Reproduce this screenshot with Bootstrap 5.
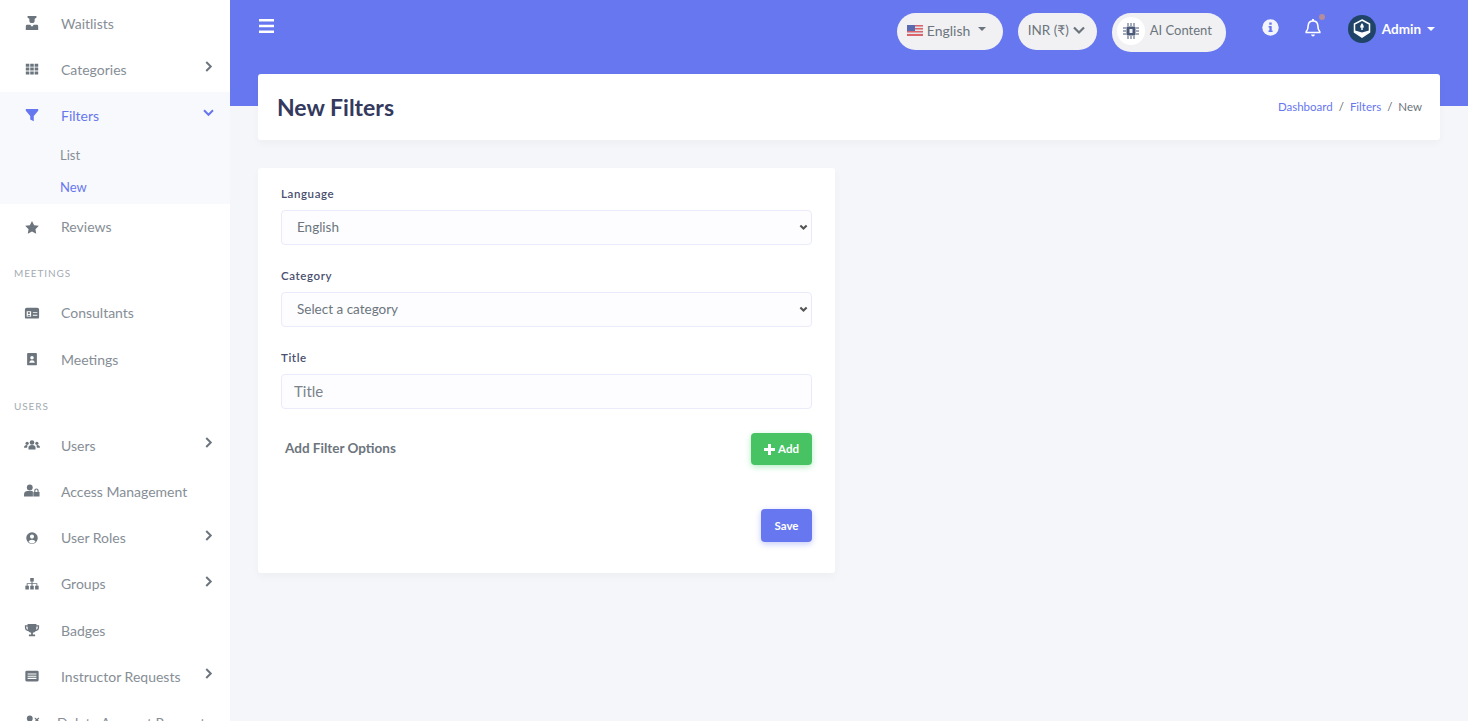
<!DOCTYPE html>
<html lang="en">
<head>
    <meta charset="UTF-8">
    <meta name="viewport" content="width=device-width, initial-scale=1.0">
    <title>New Filters</title>
    <link href="https://cdn.jsdelivr.net/npm/bootstrap@5.3.3/dist/css/bootstrap.min.css" rel="stylesheet">
    <style>
        html, body {
            height: 100%;
            overflow: hidden;
        }

        body {
            font-family: 'Lato', 'Noto Sans', sans-serif;
            font-size: 14px;
            background-color: #f4f6f9;
            color: #6c757d;
        }

        .page-shell {
            height: 721px;
        }

        /* Sidebar */
        .side-menu {
            width: 230px;
            flex: 0 0 230px;
            background-color: #fff;
            overflow: hidden;
        }

        .side-link {
            display: flex;
            align-items: center;
            height: 46.2px;
            padding: 0 17px 0 24px;
            color: #868e96;
            text-decoration: none;
            font-size: 14px;
        }

        .side-link .side-icon {
            width: 16px;
            height: 14.2px;
            margin-right: 21px;
            flex: 0 0 16px;
            fill: #6c757d;
        }

        .side-link .side-arrow {
            width: 9px;
            height: 11px;
            margin-left: auto;
            margin-top: -5px;
            fill: none;
            stroke: #6c757d;
            stroke-width: 2.2;
        }

        .side-open {
            background-color: #f8f9fc;
            height: 111.3px;
        }

        .side-open .side-link {
            color: #6777ef;
        }

        .side-open .side-icon {
            fill: #6777ef;
        }

        .side-open .side-arrow {
            stroke: #6777ef;
            width: 11px;
            height: 9px;
            margin-right: -1px;
        }

        .side-sub {
            display: block;
            height: 32px;
            line-height: 32px;
            padding-left: 60px;
            font-size: 13px;
            color: #868e96;
            text-decoration: none;
        }

        .side-sub.is-current {
            color: #6777ef;
        }

        .side-title {
            height: 40px;
            padding: 16.5px 0 0 14px;
            font-size: 10px;
            line-height: 14px;
            letter-spacing: 0.9px;
            color: #a4abb3;
            text-transform: uppercase;
        }

        .side-cut {
            margin-left: -4px;
        }

        /* Main area */
        .main-area {
            background: linear-gradient(#6777ef 106px, #f4f6f9 106px);
            min-width: 0;
        }

        .top-strip {
            height: 74px;
            padding: 13px 33px 0 29px;
        }

        .burger {
            width: 15px;
            height: 14px;
            margin-top: 6px;
            fill: #fff;
        }

        .pill-btn {
            display: flex;
            align-items: center;
            height: 37px;
            padding-bottom: 3px;
            border-radius: 19px;
            background-color: #f1f1f3;
            color: #6c757d;
            font-size: 14px;
            white-space: nowrap;
        }

        .pill-lang {
            width: 106px;
            padding-left: 10px;
            margin-right: 15px;
        }

        .pill-lang::after {
            margin-left: 8px;
            margin-top: -3px;
        }

        .pill-money {
            width: 79px;
            padding-left: 10px;
            margin-right: 15px;
            font-size: 13.5px;
        }

        .pill-ai {
            width: 114px;
            height: 39px;
            padding-left: 5px;
            margin-right: 36px;
            font-size: 13px;
        }

        .chip-hole {
            display: flex;
            align-items: center;
            justify-content: center;
            width: 28px;
            height: 28px;
            margin-right: 5px;
            border-radius: 50%;
            background-color: #fff;
        }

        .top-icon {
            position: relative;
            margin-top: 6px;
        }

        .top-bell {
            margin-left: 2px;
            margin-right: 27px;
        }

        .avatar-pic {
            margin-top: 2px;
            margin-right: 6px;
        }

        .bell-dot {
            position: absolute;
            top: -5px;
            right: -4px;
            width: 6px;
            height: 6px;
            border-radius: 50%;
            background-color: #b48c9c;
        }

        .admin-name {
            color: #fff;
            font-weight: 700;
            font-size: 13.5px;
            margin-top: 6px;
        }

        .admin-name::after {
            margin-left: 6px;
        }

        .hero-box {
            height: 66px;
            margin: 0 28px 28px 28px;
            padding: 0 18px 0 19px;
            border-radius: 3px;
            box-shadow: 0 4px 8px rgba(0, 0, 0, 0.03);
            border: 0;
        }

        .hero-box h1 {
            font-size: 23px;
            font-weight: 700;
            color: #34395e;
            margin: 2px 0 0;
        }

        .hero-box .breadcrumb {
            --bs-breadcrumb-item-padding-x: 6px;
            font-size: 11.5px;
            margin: 0;
        }

        .hero-box .breadcrumb a {
            color: #6777ef;
            text-decoration: none;
        }

        .hero-box .breadcrumb-item.active {
            color: #6c757d;
        }

        .form-box {
            width: 577px;
            height: 405px;
            margin-left: 28px;
            padding: 18px 23px 0;
            border: 0;
            border-radius: 3px;
            box-shadow: 0 4px 8px rgba(0, 0, 0, 0.03);
        }

        .field-block {
            height: 82px;
        }

        .field-block .form-label {
            display: block;
            height: 24px;
            margin: 0;
            font-size: 11.5px;
            font-weight: 600;
            line-height: 16px;
            letter-spacing: 0.6px;
            color: #4a4f70;
        }

        .field-block .form-select,
        .field-block .form-control {
            height: 35px;
            border-color: #e9ebfa;
            border-radius: 4px;
            background-color: #fdfdff;
            color: #6c757d;
            box-shadow: none;
        }

        .field-block .form-select {
            font-size: 13.5px;
            padding: 0 24px 0 15px;
            background-position: right 3px center;
            background-size: 9px 7px;
            background-image: url("data:image/svg+xml,%3csvg xmlns='http://www.w3.org/2000/svg' viewBox='0 0 12 10'%3e%3cpath fill='none' stroke='%23555' stroke-width='3' d='M1.500 2l4.500 4.500 4.500-4.500'/%3e%3c/svg%3e");
        }

        .field-block .form-control {
            font-size: 15px;
            padding: 0 12px 2px;
        }

        .field-block .form-control::placeholder {
            color: #7b838a;
        }

        .options-row {
            height: 32px;
            margin-top: 1px;
            padding-left: 4px;
        }

        .options-row span {
            font-weight: 700;
            font-size: 13.5px;
            padding-bottom: 2px;
        }

        .add-btn,
        .save-btn {
            font-size: 11.5px;
            font-weight: 700;
            border: 0;
            border-radius: 4px;
            color: #fff;
            padding: 0;
        }

        .add-btn {
            width: 61px;
            height: 32px;
            background-color: #47c363;
            box-shadow: 0 2px 6px #b5edc4;
        }

        .add-btn svg {
            width: 11px;
            height: 11px;
            fill: #fff;
            margin: -2px 3px 0 0;
        }

        .save-btn {
            width: 51px;
            height: 33px;
            margin-top: 44px;
            background-color: #6777ef;
            box-shadow: 0 2px 6px #c5cbf8;
        }
    </style>
</head>
<body>
    <div class="page-shell d-flex">
        <aside class="side-menu">
            <a class="side-link" href="#">
                <svg class="side-icon" viewBox="0 0 18 16"><path d="M4 0h10v2l-2 1v2a3 3 0 0 1-6 0V3L4 2zM3 10h4l2 2 2-2h4q1 0 1 2v4H2v-4q0-2 1-2z"/></svg>
                <span>Waitlists</span>
            </a>
            <a class="side-link" href="#">
                <svg class="side-icon" viewBox="0 0 18 16"><path d="M2 2h4v3.400H2zM7 2h4v3.400H7zM12 2h4v3.400h-4zM2 6.300h4v3.400H2zM7 6.300h4v3.400H7zM12 6.300h4v3.400h-4zM2 10.600h4V14H2zM7 10.600h4V14H7zM12 10.600h4V14h-4z"/></svg>
                <span>Categories</span>
                <svg class="side-arrow" viewBox="0 0 10 12"><path d="M2.500 1l5 5-5 5"/></svg>
            </a>
            <div class="side-open">
                <a class="side-link" href="#">
                    <svg class="side-icon" viewBox="0 0 18 16"><path d="M2 1h14v2l-5 6v6l-4-2V9L2 3z"/></svg>
                    <span>Filters</span>
                    <svg class="side-arrow" viewBox="0 0 12 10"><path d="M1 2.500l5 5 5-5"/></svg>
                </a>
                <a class="side-sub" href="#">List</a>
                <a class="side-sub is-current" href="#">New</a>
            </div>
            <a class="side-link" href="#">
                <svg class="side-icon" viewBox="0 0 18 16"><path d="M9 1l2.400 4.800 5.300.8-3.800 3.700.9 5.200L9 13.100l-4.800 2.400.9-5.200L1.300 6.600l5.300-.8z"/></svg>
                <span>Reviews</span>
            </a>
            <div class="side-title">Meetings</div>
            <a class="side-link" href="#">
                <svg class="side-icon" viewBox="0 0 18 16"><path fill-rule="evenodd" d="M3 2h12a2 2 0 0 1 2 2v9a1 1 0 0 1-1 1H2a1 1 0 0 1-1-1V4a2 2 0 0 1 2-2zM3 6v6h5V6zm7 1v1h5V7zm0 3v1h5v-1z"/><circle cx="5.500" cy="8" r="1.300"/><path d="M3.500 11.500q2-2.500 4 0z"/></svg>
                <span>Consultants</span>
            </a>
            <a class="side-link" href="#">
                <svg class="side-icon" viewBox="0 0 18 16"><path fill-rule="evenodd" d="M4.500 1h9a1 1 0 0 1 1 1v12a1 1 0 0 1-1 1h-9a1 1 0 0 1-1-1V2a1 1 0 0 1 1-1zM9 4.500a2 2 0 1 0 0 4 2 2 0 0 0 0-4zM5.800 12h6.400q-.5-2.700-3.200-2.700T5.800 12z"/></svg>
                <span>Meetings</span>
            </a>
            <div class="side-title">Users</div>
            <a class="side-link" href="#">
                <svg class="side-icon" viewBox="0 0 18 16"><circle cx="9" cy="5" r="2.600"/><circle cx="3.500" cy="6" r="1.800"/><circle cx="14.500" cy="6" r="1.800"/><path d="M5 13v-2q0-3 4-3t4 3v2zM0 11q0-3 3-3l1 .5Q3.500 10 3.500 11zM18 11q0-3-3-3l-1 .5q.5 1.500.5 2.500z"/></svg>
                <span>Users</span>
                <svg class="side-arrow" viewBox="0 0 10 12"><path d="M2.500 1l5 5-5 5"/></svg>
            </a>
            <a class="side-link" href="#">
                <svg class="side-icon" viewBox="0 0 18 16"><circle cx="6.500" cy="4" r="3.300"/><path d="M0 14v-2q0-4 4-4h5q1 0 1 1v5zM11.500 9V7.500a2.500 2.500 0 0 1 5 0V9h1v5h-7V9zm1.300 0h2.400V7.500a1.200 1.200 0 0 0-2.400 0z"/></svg>
                <span>Access Management</span>
            </a>
            <a class="side-link" href="#">
                <svg class="side-icon" viewBox="0 0 18 16"><path fill-rule="evenodd" d="M9 1.500a6.500 6.500 0 1 1 0 13 6.500 6.500 0 0 1 0-13zM9 4a2.300 2.300 0 1 0 0 4.600A2.300 2.300 0 0 0 9 4zM5 12a5.500 5.500 0 0 0 8 0q-1-2-4-2t-4 2z"/></svg>
                <span>User Roles</span>
                <svg class="side-arrow" viewBox="0 0 10 12"><path d="M2.500 1l5 5-5 5"/></svg>
            </a>
            <a class="side-link" href="#">
                <svg class="side-icon" viewBox="0 0 18 16"><path d="M7 1h4v4H9.600v2H15v3h1.500v4h-4v-4H14V8H9.600v2H11v4H7v-4h1.400V8H4v2h1.500v4h-4v-4H3V7h5.400V5H7z"/></svg>
                <span>Groups</span>
                <svg class="side-arrow" viewBox="0 0 10 12"><path d="M2.500 1l5 5-5 5"/></svg>
            </a>
            <a class="side-link" href="#">
                <svg class="side-icon" viewBox="0 0 18 16"><path d="M4 1h10v1.500h3V5q0 3.500-4 4.200-1 1.300-3 1.800v2h2.500v2h-7v-2H8v-2q-2-.5-3-1.800Q1 8.500 1 5V2.500h3zM2.500 4v1q0 2 2 2.700Q4 6 4 4zm13 0H14q0 2-.5 3.700 2-.7 2-2.700z"/></svg>
                <span>Badges</span>
            </a>
            <a class="side-link" href="#">
                <svg class="side-icon" viewBox="0 0 18 16"><path fill-rule="evenodd" d="M3 2h12a1.500 1.500 0 0 1 1.500 1.500v9A1.500 1.500 0 0 1 15 14H3a1.500 1.500 0 0 1-1.500-1.500v-9A1.500 1.500 0 0 1 3 2zm1 3v1.200h10V5zm0 2.500v1.200h10V7.500zM4 10v1.200h10V10z"/></svg>
                <span>Instructor Requests</span>
                <svg class="side-arrow" viewBox="0 0 10 12"><path d="M2.500 1l5 5-5 5"/></svg>
            </a>
            <a class="side-link" href="#">
                <svg class="side-icon" viewBox="0 0 18 16"><circle cx="6.500" cy="4" r="3.300"/><path d="M0 14v-2q0-4 4-4h5q3 0 3 4v2zM12 3l1 0 1.500 1.500L16 3l1 0v1l-1.500 1.500L17 7v1h-1l-1.500-1.500L13 8h-1V7l1.500-1.500L12 4z"/></svg>
                <span class="side-cut">Delete Account Requests</span>
            </a>
        </aside>

        <main class="main-area flex-grow-1">
            <div class="top-strip d-flex align-items-start">
                <svg class="burger" viewBox="0 0 15 14"><path d="M0 0h15v2.600H0zM0 5.700h15v2.600H0zM0 11.400h15V14H0z"/></svg>
                <div class="ms-auto d-flex align-items-start">
                    <div class="pill-btn pill-lang dropdown-toggle">
                        <svg class="me-1" width="16" height="11" viewBox="0 0 16 11"><rect width="16" height="11" fill="#e4e4ea"/><path d="M0 0h16v1.500H0zM0 3h16v1.500H0zM0 6h16v1.500H0zM0 9h16v2H0z" fill="#d9646a"/><rect width="8" height="6" fill="#5a6ab0"/></svg>
                        <span>English</span>
                    </div>
                    <div class="pill-btn pill-money">
                        <span>INR (₹)</span>
                        <svg class="ms-1" width="12" height="9" viewBox="0 0 12 9"><path d="M1 1.500l5 5 5-5" fill="none" stroke="#6c757d" stroke-width="2.200"/></svg>
                    </div>
                    <div class="pill-btn pill-ai">
                        <span class="chip-hole">
                            <svg width="16" height="16" viewBox="0 0 16 16"><rect x="3.500" y="3.500" width="9" height="9" rx="1" fill="#4b5a78"/><rect x="6.500" y="6" width="3" height="4" fill="#f1f1f3"/><path d="M0 5h3M0 8h3M0 11h3M13 5h3M13 8h3M13 11h3M5 0v3M8 0v3M11 0v3M5 13v3M8 13v3M11 13v3" stroke="#4b5a78"/></svg>
                        </span>
                        <span>AI Content</span>
                    </div>
                    <div class="top-icon me-4">
                        <svg class="d-block" width="17" height="17" viewBox="0 0 17 17"><circle cx="8.500" cy="8.500" r="8.200" fill="#f4f4fb"/><path d="M7.300 3.500h2.400v2.200H7.300zM6.600 7h3.100v4.500h.9V13H6.500v-1.500h.9V8.500h-.8z" fill="#6777ef"/></svg>
                    </div>
                    <div class="top-icon top-bell">
                        <svg class="d-block" width="16" height="18" viewBox="0 0 16 18"><path d="M8 2q4.500 0 4.800 4.500 0 4 2 6.300v.7H1.200v-.7q2-2.300 2-6.300Q3.500 2 8 2z" fill="none" stroke="#fff" stroke-width="1.600"/><path d="M6 15.500h4q-.5 2-2 2t-2-2zM7 0h2v2H7z" fill="#fff"/></svg>
                        <span class="bell-dot"></span>
                    </div>
                    <svg class="avatar-pic" width="28" height="28" viewBox="0 0 28 28"><circle cx="14" cy="14" r="14" fill="#1f4468"/><path d="M14 5l7.500 4v8L14 22l-7.500-5V9z" fill="none" stroke="#fff" stroke-width="1.500"/><path d="M7 15.500l7 2 7-2v1.500l-7 5-7-5z" fill="#fff"/><path d="M14 8q2 2.500 2 4.500h-1.300V15h-1.400v-2.500H12Q12 10.500 14 8z" fill="#fff"/></svg>
                    <div class="admin-name dropdown-toggle">Admin</div>
                </div>
            </div>

            <section class="card hero-box flex-row align-items-center justify-content-between">
                <h1>New Filters</h1>
                <nav aria-label="breadcrumb">
                    <ol class="breadcrumb">
                        <li class="breadcrumb-item"><a href="#">Dashboard</a></li>
                        <li class="breadcrumb-item"><a href="#">Filters</a></li>
                        <li class="breadcrumb-item active" aria-current="page">New</li>
                    </ol>
                </nav>
            </section>

            <form class="card form-box">
                <div class="field-block">
                    <label class="form-label" for="language">Language</label>
                    <select class="form-select" id="language"><option>English</option></select>
                </div>
                <div class="field-block">
                    <label class="form-label" for="category">Category</label>
                    <select class="form-select" id="category"><option>Select a category</option></select>
                </div>
                <div class="field-block">
                    <label class="form-label" for="title">Title</label>
                    <input class="form-control" id="title" type="text" placeholder="Title">
                </div>
                <div class="options-row d-flex align-items-center justify-content-between">
                    <span>Add Filter Options</span>
                    <button class="btn add-btn" type="button">
                        <svg viewBox="0 0 11 11"><path d="M4 0h3v4h4v3H7v4H4V7H0V4h4z"/></svg>Add
                    </button>
                </div>
                <div class="d-flex justify-content-end">
                    <button class="btn save-btn" type="submit">Save</button>
                </div>
            </form>
        </main>
    </div>

    <script src="https://cdn.jsdelivr.net/npm/bootstrap@5.3.3/dist/js/bootstrap.bundle.min.js"></script>
</body>
</html>
